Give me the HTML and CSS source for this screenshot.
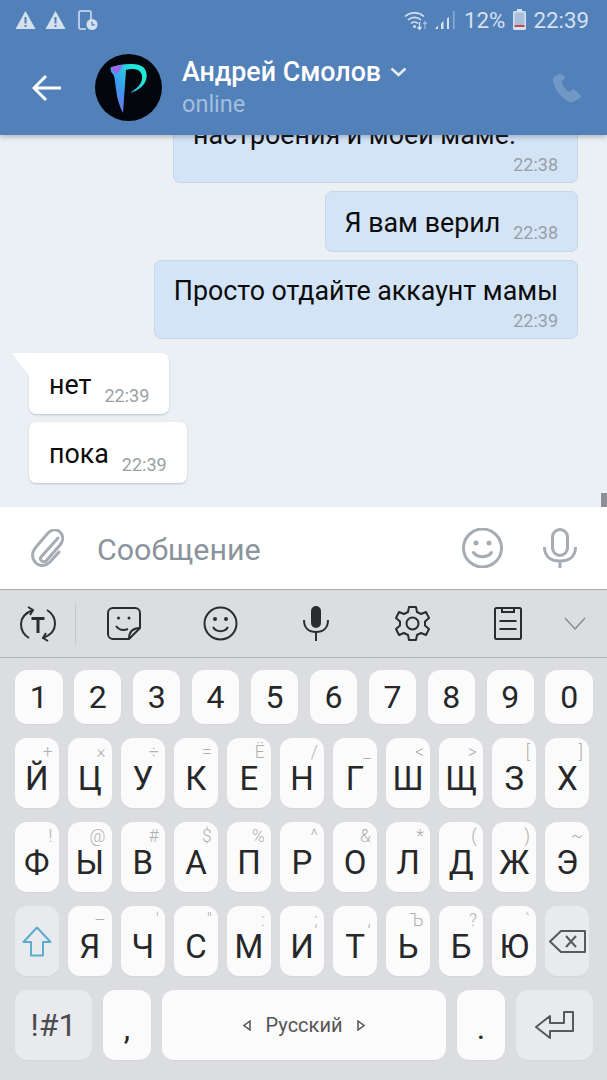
FILE: index.html
```html
<!DOCTYPE html>
<html lang="ru">
<head>
    <meta charset="UTF-8">
    <meta name="viewport" content="width=device-width, initial-scale=1.0">
    <title>Андрей Смолов</title>
    <link rel="stylesheet" href="styles.css">
</head>
<body>
    <!-- Status bar and conversation header -->
    <header class="header">
        <div class="status">
            <svg class="warn" width="21" height="20" viewBox="0 0 21 20"><path d="M10.5 1 20.5 19H.5z" fill="#d6e1ef"/><path d="M9.5 7h2v6.5h-2zM9.5 15h2v2h-2z" fill="#5280b9"/></svg>
            <svg class="warn warn-two" width="21" height="20" viewBox="0 0 21 20"><path d="M10.5 1 20.5 19H.5z" fill="#d6e1ef"/><path d="M9.5 7h2v6.5h-2zM9.5 15h2v2h-2z" fill="#5280b9"/></svg>
            <svg class="doc" width="20" height="20" viewBox="0 0 20 20"><path d="M8 19H2.5a1.5 1.5 0 0 1-1.500-1.500V2.500A1.500 1.500 0 0 1 2.500 1h9A1.500 1.500 0 0 1 13 2.500V10" fill="none" stroke="#d6e1ef" stroke-width="1.500"/><circle cx="14" cy="14.500" r="5.500" fill="#d6e1ef"/><path d="M14 11.500v3.300h3" fill="none" stroke="#5280b9" stroke-width="1.300"/></svg>
            <div class="status-right">
                <svg class="wifi" width="24" height="22" viewBox="0 0 24 22"><g fill="none" stroke="#d6e1ef" stroke-width="1.700"><path d="M1 7.500a14 14 0 0 1 19 0"/><path d="M4 11a9.500 9.500 0 0 1 13 0"/><path d="M7 14.500a5 5 0 0 1 7 0"/></g><circle cx="10.500" cy="17.500" r="1.500" fill="#d6e1ef"/><path d="M15.500 13v7M13.500 18l2 2.500 2-2.500" fill="none" stroke="#d6e1ef" stroke-width="1.300"/><path d="M21 20v-7M19.300 15l1.700-2.300 1.700 2.300" fill="none" stroke="#a3bfe0" stroke-width="1.200"/></svg>
                <svg class="signal" width="20" height="20" viewBox="0 0 20 20"><path d="M0 19h3v-3.500zM6 19h2.500V11L6 13.500zM12 19h2V7l-2 1.500z" fill="#d6e1ef"/><path d="M18 19h1.500V1H18z" fill="#8fadd3"/></svg>
                <span class="percent">12%</span>
                <svg class="battery" width="13" height="21" viewBox="0 0 13 21"><path d="M4 0h5v2H4z" fill="#d6e1ef"/><rect y="2" width="13" height="19" rx="1.500" fill="#d6e1ef"/><rect x="1.500" y="3.500" width="10" height="12.500" fill="#a9c0dc"/><rect x="1.500" y="16" width="10" height="2" fill="#c2494f"/></svg>
                <span class="clock">22:39</span>
            </div>
        </div>
        <div class="nav">
            <svg class="back" width="30" height="28" viewBox="0 0 30 28"><path d="M29 14H3M14 2 2 14l12 12" fill="none" stroke="#fff" stroke-width="3"/></svg>
            <svg class="avatar" width="67" height="67" viewBox="0 0 67 67">
                <defs>
                    <linearGradient id="logo" x1="0" y1="1" x2=".8" y2=".2">
                        <stop offset="0" stop-color="#8a5be8"/>
                        <stop offset=".5" stop-color="#3a9cf0"/>
                        <stop offset="1" stop-color="#20e8d8"/>
                    </linearGradient>
                </defs>
                <circle cx="33.500" cy="33.500" r="33.500" fill="#03070d"/>
                <path d="M17 13c8-3 20-4 27-2 7 2 9 9 7 15-2 6-8 11-16 13 4-3 11-7 12-14 1-6-3-10-9-10-3 0-5 0-7 1l-3 43c-3-6-6-14-7-24-1-7-1-12-3-15-2-1-3-5-2-7z" fill="url(#logo)"/>
                <path d="M17 13c3-1 7-2 11-2l-4 7-3 2c-2-1-5-5-4-7z" fill="#9a6ae6"/>
            </svg>
            <div class="peer">
                <div class="peer-name">Андрей Смолов
                    <svg width="17" height="10" viewBox="0 0 17 10"><path d="M1.500 1.500 8.500 8l7-6.500" fill="none" stroke="#e4ecf6" stroke-width="2.500"/></svg>
                </div>
                <div class="peer-status">online</div>
            </div>
            <svg class="phone" width="30" height="30" viewBox="0 0 30 30"><path d="M7 1 2 4C0 6 1 12 6 19c5 7 11 11 15 10l7-4c1-1 1-2 0-3l-5-5c-1-1-2-1-3 0l-2 2c-2 0-4-2-6-5-2-3-3-5-2-6l2-2c1-1 1-2 .5-3L10 2C9 1 8 .5 7 1z" fill="#7199c6"/></svg>
        </div>
    </header>

    <!-- Messages -->
    <main class="chat">
        <div class="msg msg-out msg-tall msg-wide">
            <div class="msg-text">настроения и моей маме.</div>
            <div class="msg-time">22:38</div>
        </div>
        <div class="msg msg-out">
            <div class="msg-text">Я вам верил</div>
            <div class="msg-time">22:38</div>
        </div>
        <div class="msg msg-out msg-tall">
            <div class="msg-text">Просто отдайте аккаунт мамы</div>
            <div class="msg-time">22:39</div>
        </div>
        <div class="msg msg-in msg-first">
            <div class="msg-text">нет</div>
            <div class="msg-time">22:39</div>
        </div>
        <div class="msg msg-in">
            <div class="msg-text">пока</div>
            <div class="msg-time">22:39</div>
        </div>
        <div class="scroll-thumb"></div>
    </main>

    <!-- Message input -->
    <div class="composer">
        <svg width="33" height="38" viewBox="0 0 33 38"><path d="M27 9 10 28c-2 3 2 6 5 4L29 16c4-5 3-10 0-13-3-3-8-3-12 1L5 18c-5 6-4 12 0 16 4 4 10 3 14-1l9-10" fill="none" stroke="#a5acb3" stroke-width="3" stroke-linecap="round"/></svg>
        <span class="placeholder">Сообщение</span>
        <svg class="composer-smile" width="41" height="40" viewBox="0 0 41 40"><circle cx="20.500" cy="20" r="19" fill="none" stroke="#a5acb3" stroke-width="3"/><circle cx="14" cy="15" r="2.500" fill="#a5acb3"/><circle cx="27" cy="15" r="2.500" fill="#a5acb3"/><path d="M11.500 24.500c4 5.500 14 5.500 18 0" fill="none" stroke="#a5acb3" stroke-width="3" stroke-linecap="round"/></svg>
        <svg class="composer-mic" width="34" height="40" viewBox="0 0 34 40"><rect x="9.500" y="1.500" width="15" height="26" rx="7.500" fill="none" stroke="#a5acb3" stroke-width="3"/><path d="M1.500 19c0 10 7 14 15.500 14s15.500-4 15.500-14M17 33v7" fill="none" stroke="#a5acb3" stroke-width="3"/></svg>
    </div>

    <!-- Keyboard toolbar -->
    <div class="toolbar">
        <div class="tool tool-mode">
            <svg width="36" height="36" viewBox="0 0 36 36"><g fill="none" stroke="#2b2c2e" stroke-width="2"><path d="M13 4C5 7 1 12 1 18c0 6 3 11 8 14"/><path d="M23 32c8-3 12-8 12-14 0-6-3-11-8-14"/><path d="M8 1l5 3-3 5M28 35l-5-3 3-5"/></g><path d="M11.500 11h13v3h-5v13h-3V14h-5z" fill="#2b2c2e"/></svg>
        </div>
        <div class="tool-divider"></div>
        <div class="tool">
            <svg width="34" height="33" viewBox="0 0 34 33"><path d="M22 32H6a5 5 0 0 1-5-5V6a5 5 0 0 1 5-5h22a5 5 0 0 1 5 5v15z" fill="none" stroke="#2b2c2e" stroke-width="2"/><path d="M22 32c0-7 4-11 11-11" fill="none" stroke="#2b2c2e" stroke-width="2"/><circle cx="11.500" cy="11" r="1.500" fill="#2b2c2e"/><circle cx="22" cy="11" r="1.500" fill="#2b2c2e"/><path d="M9 19c3 4 7 5 12 3" fill="none" stroke="#2b2c2e" stroke-width="2"/></svg>
        </div>
        <div class="tool">
            <svg width="35" height="35" viewBox="0 0 35 35"><circle cx="17.500" cy="17.500" r="16" fill="none" stroke="#2b2c2e" stroke-width="2"/><circle cx="12" cy="13" r="2" fill="#2b2c2e"/><circle cx="23" cy="13" r="2" fill="#2b2c2e"/><path d="M10 21c3 5.500 12 5.500 15 0" fill="none" stroke="#2b2c2e" stroke-width="2"/></svg>
        </div>
        <div class="tool">
            <svg width="26" height="35" viewBox="0 0 26 35"><rect x="8" y="0" width="10" height="22" rx="5" fill="#2b2c2e"/><path d="M1 14c0 8 5 12 12 12s12-4 12-12M13 26v9" fill="none" stroke="#2b2c2e" stroke-width="2"/></svg>
        </div>
        <div class="tool">
            <svg width="35" height="35" viewBox="0 0 35 35"><path d="M14 1h7l1 5 4 2 5-2 3 6-4 3.500v4l4 3.500-3 6-5-2-4 2-1 5h-7l-1-5-4-2-5 2-3-6 4-3.500v-4L1 12l3-6 5 2 4-2z" fill="none" stroke="#2b2c2e" stroke-width="2" stroke-linejoin="round"/><circle cx="17.500" cy="17.500" r="6" fill="none" stroke="#2b2c2e" stroke-width="2"/></svg>
        </div>
        <div class="tool">
            <svg width="28" height="33" viewBox="0 0 28 33"><rect x="1" y="1" width="26" height="31" rx="1.500" fill="none" stroke="#2b2c2e" stroke-width="2"/><path d="M8 1v4h12V1M5.500 14h17M5.500 22h17" fill="none" stroke="#2b2c2e" stroke-width="2"/></svg>
        </div>
        <div class="tool tool-more">
            <svg width="22" height="13" viewBox="0 0 22 13"><path d="M1 1l10 11L21 1" fill="none" stroke="#8a8c90" stroke-width="1.500"/></svg>
        </div>
    </div>

    <!-- Keyboard -->
    <div class="keyboard">
        <div class="row row-digits">
            <div class="key">1</div><div class="key">2</div><div class="key">3</div><div class="key">4</div><div class="key">5</div>
            <div class="key">6</div><div class="key">7</div><div class="key">8</div><div class="key">9</div><div class="key">0</div>
        </div>
        <div class="row row-letters">
            <div class="key key-letter">Й<span class="hint">+</span></div>
            <div class="key key-letter">Ц<span class="hint">×</span></div>
            <div class="key key-letter">У<span class="hint">÷</span></div>
            <div class="key key-letter">К<span class="hint">=</span></div>
            <div class="key key-letter">Е<span class="hint">Ё</span></div>
            <div class="key key-letter">Н<span class="hint">/</span></div>
            <div class="key key-letter">Г<span class="hint">_</span></div>
            <div class="key key-letter">Ш<span class="hint">&lt;</span></div>
            <div class="key key-letter">Щ<span class="hint">&gt;</span></div>
            <div class="key key-letter">З<span class="hint">[</span></div>
            <div class="key key-letter">Х<span class="hint">]</span></div>
        </div>
        <div class="row row-letters">
            <div class="key key-letter">Ф<span class="hint">!</span></div>
            <div class="key key-letter">Ы<span class="hint">@</span></div>
            <div class="key key-letter">В<span class="hint">#</span></div>
            <div class="key key-letter">А<span class="hint">$</span></div>
            <div class="key key-letter">П<span class="hint">%</span></div>
            <div class="key key-letter">Р<span class="hint">^</span></div>
            <div class="key key-letter">О<span class="hint">&amp;</span></div>
            <div class="key key-letter">Л<span class="hint">*</span></div>
            <div class="key key-letter">Д<span class="hint">(</span></div>
            <div class="key key-letter">Ж<span class="hint">)</span></div>
            <div class="key key-letter">Э<span class="hint">~</span></div>
        </div>
        <div class="row row-letters">
            <div class="key key-fn">
                <svg width="30" height="31" viewBox="0 0 30 31"><path d="M15 1.500 28.500 16H21v13.500H9V16H1.500z" fill="none" stroke="#5cacd0" stroke-width="2" stroke-linejoin="round"/></svg>
            </div>
            <div class="key key-letter">Я<span class="hint">–</span></div>
            <div class="key key-letter">Ч<span class="hint">'</span></div>
            <div class="key key-letter">С<span class="hint">"</span></div>
            <div class="key key-letter">М<span class="hint">:</span></div>
            <div class="key key-letter">И<span class="hint">;</span></div>
            <div class="key key-letter">Т<span class="hint">,</span></div>
            <div class="key key-letter">Ь<span class="hint">Ъ</span></div>
            <div class="key key-letter">Б<span class="hint">?</span></div>
            <div class="key key-letter">Ю<span class="hint">`</span></div>
            <div class="key key-fn">
                <svg width="37" height="23" viewBox="0 0 37 23"><path d="M12 1h24v21H12L1 11.500z" fill="none" stroke="#57595c" stroke-width="2" stroke-linejoin="round"/><path d="M17 6l10 11M27 6 17 17" fill="none" stroke="#57595c" stroke-width="2"/></svg>
            </div>
        </div>
        <div class="row row-bottom">
            <div class="key key-fn key-symbols">!#1</div>
            <div class="key key-punct">,</div>
            <div class="key key-space">
                <svg width="8" height="11" viewBox="0 0 8 11"><path d="M7 1 1 5.500 7 10z" fill="none" stroke="#555" stroke-width="1.500"/></svg>
                <span>Русский</span>
                <svg width="8" height="11" viewBox="0 0 8 11"><path d="M1 1l6 4.500L1 10z" fill="none" stroke="#555" stroke-width="1.500"/></svg>
            </div>
            <div class="key key-punct">.</div>
            <div class="key key-fn">
                <svg width="39" height="28" viewBox="0 0 39 28"><path d="M38 1v19H15v7L1 16 15 5v7h14V1z" fill="none" stroke="#57595c" stroke-width="2" stroke-linejoin="round"/></svg>
            </div>
        </div>
    </div>
</body>
</html>
```

FILE: styles.css
```css
* {
    box-sizing: border-box;
}

body {
    font-family: Roboto, "Noto Sans", sans-serif;
    background-color: #dcdde1;
    margin: 0;
    width: 607px;
    height: 1080px;
    overflow: hidden;
    display: flex;
    flex-direction: column;
}

svg {
    display: block;
    flex-shrink: 0;
}

/* Header */
.header {
    height: 135px;
    flex-shrink: 0;
    background: #5280b9;
    box-shadow: 0 2px 5px rgba(60, 70, 90, 0.35);
    position: relative;
    z-index: 2;
}

.status {
    height: 38px;
    padding: 1px 18px 0 15px;
    display: flex;
    align-items: center;
}

.warn-two {
    margin-left: 9px;
}

.doc {
    margin-left: 12px;
}

.status-right {
    margin-left: auto;
    display: flex;
    align-items: center;
    color: #d6e1ef;
    font-size: 22.300px;
}

.signal {
    margin-left: 7px;
}

.percent {
    margin-left: 9px;
}

.battery {
    margin-left: 8px;
}

.clock {
    margin-left: 7px;
}

.nav {
    height: 97px;
    padding: 2px 25px 0 32px;
    display: flex;
    align-items: center;
}

.avatar {
    margin-left: 33px;
}

.peer {
    margin-left: 20px;
}

.peer-name {
    display: flex;
    align-items: center;
    gap: 9px;
    margin-bottom: 2px;
    color: #fff;
    font-size: 26.800px;
    font-weight: 500;
    line-height: 30px;
}

.peer-status {
    color: #a3bfe0;
    font-size: 23.500px;
    line-height: 30px;
}

.phone {
    margin-left: auto;
}

/* Messages */
.chat {
    flex: 1;
    min-height: 0;
    position: relative;
    overflow: hidden;
    background: #ebf0f5;
    padding: 0 29px 24px;
    display: flex;
    flex-direction: column;
    justify-content: flex-end;
    gap: 8px;
}

.msg {
    flex-shrink: 0;
    position: relative;
    display: flex;
    align-items: flex-end;
    gap: 13px;
    border-radius: 7px;
    font-size: 26.800px;
}

.msg-out {
    align-self: flex-end;
    padding: 14px 19px 8px;
    background: #d4e4f7;
    border: 1px solid #c6d5e8;
}

.msg-out .msg-text {
    margin-bottom: 3px;
}

.msg-in {
    align-self: flex-start;
    padding: 15px 20px 8px;
    background: #fff;
    box-shadow: 0 1px 2px rgba(120, 135, 155, 0.4);
}

.msg-in .msg-text {
    margin-bottom: 4px;
}

.msg-tall {
    flex-direction: column;
    align-items: flex-end;
    gap: 3px;
    padding: 13px 19px 7px;
}

.msg-tall .msg-text {
    margin-bottom: 0;
}

.msg-wide {
    width: 405px;
}

.msg-wide .msg-text {
    align-self: flex-start;
}

.msg-first {
    margin-top: 6px;
    border-top-left-radius: 0;
}

.msg-first::before {
    content: "";
    position: absolute;
    left: -17px;
    top: 0;
    width: 18px;
    height: 24px;
    background: #fff;
    clip-path: polygon(0 0, 100% 0, 100% 100%);
}

.msg-text {
    color: #0b0b0b;
    line-height: 34px;
    white-space: nowrap;
}

.msg-time {
    color: #9a9fa5;
    font-size: 18px;
    line-height: 20px;
}

.scroll-thumb {
    position: absolute;
    right: 0;
    bottom: 0;
    width: 6px;
    height: 14px;
    background: #8d9196;
}

/* Composer */
.composer {
    height: 82px;
    flex-shrink: 0;
    background: #fff;
    padding: 0 30px 0 31px;
    display: flex;
    align-items: center;
}

.placeholder {
    margin-left: 33px;
    padding-top: 2px;
    color: #8b939b;
    font-size: 30.400px;
}

.composer-smile {
    margin-left: auto;
}

.composer-mic {
    margin-left: 40px;
}

/* Toolbar */
.toolbar {
    height: 69px;
    flex-shrink: 0;
    background: #dcdde1;
    border-top: 1px solid #a9aaad;
    border-bottom: 1px solid #b4b5b8;
    display: flex;
    align-items: center;
}

.tool {
    width: 96px;
    display: flex;
    justify-content: center;
}

.tool-mode {
    width: 75px;
}

.tool-divider {
    width: 1px;
    height: 42px;
    background: #c6c7cb;
}

.tool-more {
    width: 38px;
}

/* Keyboard */
.keyboard {
    height: 422px;
    flex-shrink: 0;
    padding: 12px 14px 0 15px;
    display: flex;
    flex-direction: column;
    gap: 14px;
}

.row {
    display: grid;
    height: 70px;
}

.row-digits {
    height: 54px;
    grid-template-columns: repeat(10, 1fr);
    column-gap: 11.400px;
}

.row-letters {
    margin-right: 4px;
    grid-template-columns: repeat(11, 1fr);
    column-gap: 9.500px;
}

.row-bottom {
    grid-template-columns: 77px 48px 1fr 48px 77px;
    column-gap: 11px;
}

.key {
    position: relative;
    display: flex;
    align-items: center;
    justify-content: center;
    background: #fbfbfb;
    border-radius: 12px;
    box-shadow: 0 1px 1px rgba(0, 0, 0, 0.04);
    color: #262729;
    font-size: 32px;
}

.key-letter {
    padding-top: 11px;
    font-size: 33px;
    line-height: 1;
}

.key-fn {
    background: #e9eaee;
}

.key-symbols {
    color: #4b4c4f;
}

.key-punct {
    align-items: flex-end;
    padding-bottom: 13px;
}

.key-space {
    gap: 15px;
    color: #555;
    font-size: 20px;
}

.hint {
    position: absolute;
    top: 6px;
    right: 6px;
    color: #b0b0b2;
    font-size: 17.500px;
    font-weight: 300;
    line-height: 16px;
}
```
